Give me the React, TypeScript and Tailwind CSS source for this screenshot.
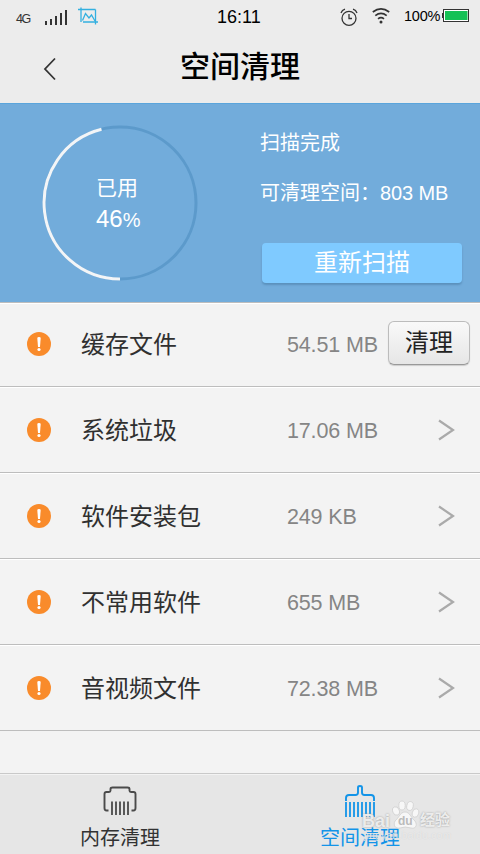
import React from 'react';

type Item = { name: string; size: string; action?: string };

const items: Item[] = [
  { name: '缓存文件', size: '54.51 MB', action: '清理' },
  { name: '系统垃圾', size: '17.06 MB' },
  { name: '软件安装包', size: '249 KB' },
  { name: '不常用软件', size: '655 MB' },
  { name: '音视频文件', size: '72.38 MB' },
];

function StatusBar() {
  return (
    <div className="flex h-8 items-start pl-4 text-black">
      <span className="mt-[11px] w-[29px] text-[12.5px] leading-4 tracking-[-1.5px] text-[#333]">4G</span>
      <svg className="mt-[9px]" width="23" height="16" viewBox="0 0 23 16" fill="#333">
        <rect x="0" y="12" width="2" height="4" />
        <rect x="5" y="10" width="2" height="6" />
        <rect x="10" y="7" width="2" height="9" />
        <rect x="15" y="4" width="2" height="12" />
        <rect x="20" y="1" width="2" height="15" />
      </svg>
      <svg className="ml-[10px] mt-[7px]" width="20" height="18" viewBox="0 0 20 18" fill="none" stroke="#33b0e0">
        <path d="M3 .5V15M0 2.500H17.500M17.500 2.500V17.500M5 15H20" strokeWidth="1.3" />
        <path d="M4.500 13.500L7.500 6.500L11 11L13.500 8L17 14" strokeWidth="1.3" />
      </svg>
      <span className="ml-[119px] mt-[7px] w-[46px] text-[18px] leading-5">16:11</span>
      <svg className="ml-[77px] mt-2" width="18" height="18" viewBox="0 0 18 18" fill="none" stroke="#333" strokeWidth="1.3">
        <circle cx="9" cy="10.300" r="7" />
        <path d="M9 6v4.500h3M1 5Q2 2 5 1.200M17 5Q16 2 13 1.200" />
      </svg>
      <svg className="ml-[14px] mt-2" width="18" height="16" viewBox="0 0 18 16" fill="none" stroke="#333" strokeWidth="1.700">
        <path d="M.8 4Q9-2.200 17.200 4M3.300 7.600Q9 3.200 14.700 7.600M6 10.800Q9 8.500 12 10.800" />
        <circle cx="9" cy="14" r="1.500" fill="#333" stroke="none" />
      </svg>
      <span className="ml-[14px] mt-[7px] w-[38px] text-[14.5px] leading-[18px] tracking-[-0.2px]">100%</span>
      <svg className="mt-[9px]" width="28" height="13" viewBox="0 0 28 13">
        <rect x="1.500" y=".5" width="25" height="12" fill="#fff" stroke="#333" />
        <path d="M.5 4v5" stroke="#333" />
        <rect x="3" y="2" width="22.500" height="9" fill="#14c155" />
      </svg>
    </div>
  );
}

function Summary() {
  return (
    <section className="flex h-[199px] border-t border-[#5aa5dc] bg-[#72acdb] text-white">
      <div className="grid h-[198px] w-60 pl-[42px] pt-[21px]">
        <svg className="col-start-1 row-start-1" width="156" height="156" viewBox="0 0 156 156" fill="none" strokeWidth="3">
          <circle cx="78" cy="78" r="76" stroke="#5c9acb" />
          <path d="M78 154A76 76 0 0 1 59.500 4.300" stroke="#f3f5f7" />
        </svg>
        <div className="col-start-1 row-start-1 flex flex-col pl-[54px] pt-[48px]">
          <span className="text-[21px] leading-[30px]">已用</span>
          <span className="text-[24px] leading-8">46<span className="text-[20px] tracking-[-1px]">%</span></span>
        </div>
      </div>
      <div className="flex flex-col pl-5 pt-6">
        <span className="text-[20px] leading-[30px]">扫描完成</span>
        <span className="mt-5 whitespace-nowrap text-[20px] leading-[30px]">可清理空间：<span className="tracking-[-0.1px]">803 MB</span></span>
        <button className="ml-0.5 mt-[35px] flex h-10 w-[200px] items-center justify-center rounded bg-[#7fcaff] text-[24px] shadow-[0_2px_2px_#5b91bd]">重新扫描</button>
      </div>
    </section>
  );
}

function Alert() {
  return (
    <svg className="ml-[27px]" width="24" height="24" viewBox="0 0 24 24">
      <circle cx="12" cy="12" r="12" fill="#f98b2b" />
      <path d="M10.300 6Q10.300 5 12 5Q13.700 5 13.700 6L13 15h-2z" fill="#fff" />
      <circle cx="12" cy="17.500" r="1.600" fill="#fff" />
    </svg>
  );
}

function Row({ item }: { item: Item }) {
  return (
    <li className={`flex items-center border-b border-[#bdbdbd] shadow-[inset_0_1px_0_#fff] ${item.action ? 'h-[84px] pb-0.5' : 'h-[86px]'}`}>
      <Alert />
      <span className="ml-[30px] w-[206px] pt-0.5 text-[24px] leading-[34px] text-[#303030]">{item.name}</span>
      <span className="w-[101px] whitespace-nowrap pt-0.5 text-[21.500px] leading-6 tracking-[-0.15px] text-[#858585]">{item.size}</span>
      {item.action ? (
        <button className="mb-0.5 flex h-11 w-[82px] items-center justify-center rounded-md border border-[#bcbcbc] border-b-[#999] bg-linear-to-b from-[#f9f9f9] to-[#e6e6e6] text-[24px] text-[#222] shadow-[0_1px_1px_#ccc]">{item.action}</button>
      ) : (
        <svg className="ml-[50px]" width="17" height="22" viewBox="0 0 17 22" fill="none" stroke="#aaa" strokeWidth="2.200">
          <path d="M1 1.500L15 11L1 20.500" />
        </svg>
      )}
    </li>
  );
}

function Watermark() {
  return (
    <div className="absolute left-[122px] top-[26px] h-14 w-[92px] text-[#f5f5f5]/90">
      <svg className="absolute left-[29px] top-0" width="29" height="30" viewBox="0 0 29 30" fill="#f7f7f7" stroke="#ccc" strokeWidth=".7">
        <ellipse cx="5" cy="11" rx="3.300" ry="4.300" transform="rotate(-20 5 11)" />
        <ellipse cx="11" cy="5.500" rx="3.200" ry="4.500" />
        <ellipse cx="19" cy="6" rx="3.200" ry="4.500" transform="rotate(12 19 6)" />
        <ellipse cx="24.500" cy="13" rx="3.200" ry="4.300" transform="rotate(15 24.500 13)" />
        <path d="M14 12C19 12 20 18 24 21C27 26 24 29 20 28Q14 26 9 28C4 29 2 25 4 21C8 18 9 12 14 12Z" />
      </svg>
      <span className="absolute left-0 top-[11px] text-[18px] font-bold leading-5 [text-shadow:0_0_2px_#999]">Bai</span>
      <span className="absolute left-[36px] top-[13px] text-[12px] font-bold leading-4 text-[#bbb]">du</span>
      <span className="absolute left-[58px] top-[10px] whitespace-nowrap text-[15px] font-bold leading-5 [text-shadow:0_0_2px_#999]">经验</span>
      <span className="absolute left-[2px] top-[30px] whitespace-nowrap text-[10px] leading-3 tracking-[0.4px] text-white/50 [text-shadow:0_0_1px_#ccc]">jingyan.baidu.com</span>
    </div>
  );
}

function Tabs() {
  return (
    <nav className="mt-auto flex h-[81px] border-t border-[#c9c9c9] bg-[#e6e6e6] text-[20px] leading-[26px] shadow-[inset_0_1px_0_#f3f3f3]">
      <div className="flex w-60 flex-col items-center pt-3 text-[#333]">
        <svg width="34" height="30" viewBox="0 0 34 30" fill="none" stroke="#4b4b4b" strokeWidth="1.900">
          <path d="M5.500 24.500H3.500Q1.500 24.500 1.500 22V8Q1.500 6 3.500 6H6Q7.500 6 7.500 4.500V3Q7.500 1.500 9.500 1.500H24.500Q26.500 1.500 26.500 3V4.500Q26.500 6 28 6H30.500Q32.500 6 32.500 8V22Q32.500 24.500 30.500 24.500H28.500" />
          <path d="M9 15.500V29M13 15.500V29M17 15.500V29M21 15.500V29M25 15.500V29" strokeWidth="1.800" />
        </svg>
        <span className="mt-[9px]">内存清理</span>
      </div>
      <div className="relative flex w-60 flex-col items-center pt-[10px] text-[#1394e8]">
        <svg width="32" height="34" viewBox="0 0 32 34" fill="none" stroke="#1394e8" strokeWidth="1.900">
          <path d="M2 17V14Q2 11 5 11H11.500Q14 11 14 8.500V3.500Q14 2 16 2Q18 2 18 3.500V8.500Q18 11 20.500 11H27Q30 11 30 14V17" />
          <path d="M2 18V33M6 18V33M10 18V33M14 18V33M18 18V33M22 18V33M26 18V33M30 18V33" strokeWidth="1.800" />
        </svg>
        <span className="mt-[7px]">空间清理</span>
        <Watermark />
      </div>
    </nav>
  );
}

export default function App() {
  return (
    <main className="flex h-[854px] w-[480px] flex-col overflow-hidden bg-[#f3f3f3] font-['Liberation_Sans','Noto_Sans_CJK_SC',sans-serif]">
      <header className="h-[103px] shrink-0 bg-[#ececec]">
        <StatusBar />
        <div className="flex h-[71px] items-center">
          <svg className="ml-[43px] mt-0.5" width="14" height="24" viewBox="0 0 14 24" fill="none" stroke="#333" strokeWidth="1.800">
            <path d="M12 1.500L2 12L12 22.500" />
          </svg>
          <h1 className="ml-[123px] pb-0.5 text-[30px] font-medium leading-10 text-black">空间清理</h1>
        </div>
      </header>
      <Summary />
      <ul className="border-t border-[#bdbdbd]">
        {items.map((item) => <Row key={item.name} item={item} />)}
      </ul>
      <Tabs />
    </main>
  );
}
